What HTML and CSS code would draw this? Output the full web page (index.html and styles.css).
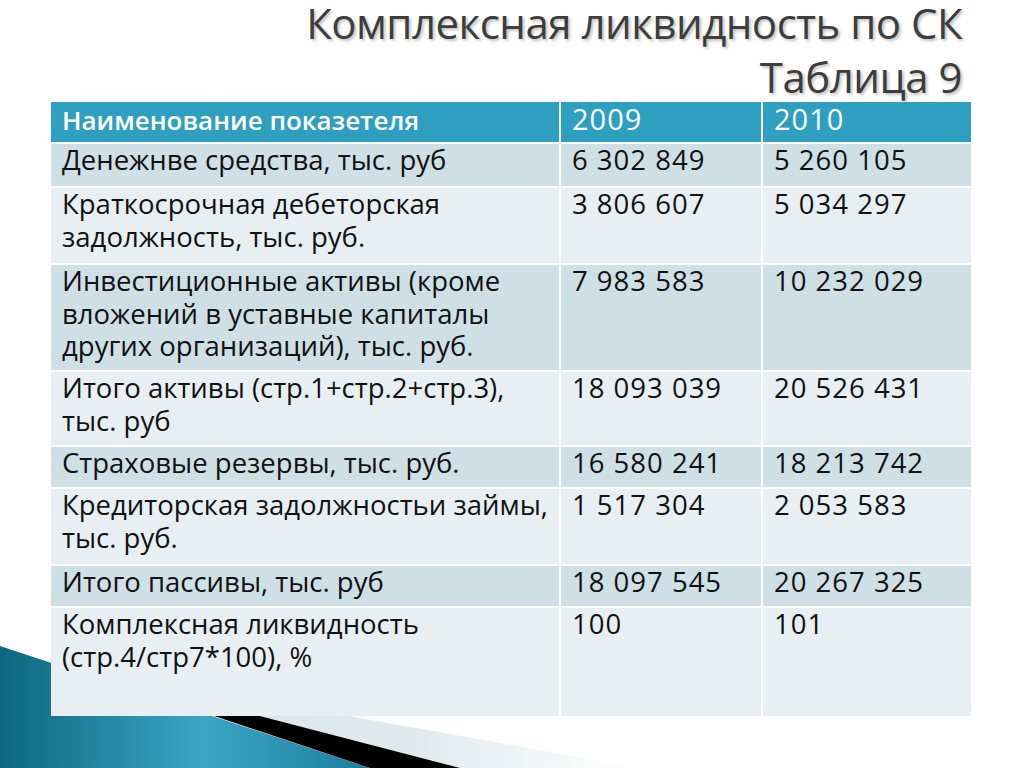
FILE: index.html
```html
<!DOCTYPE html>
<html lang="ru">
<head>
<meta charset="utf-8">
<title>Комплексная ликвидность по СК</title>
<link rel="stylesheet" href="styles.css">
</head>
<body>
<div class="slide">
  <svg class="deco" width="1024" height="168" viewBox="0 0 1024 168" xmlns="http://www.w3.org/2000/svg">
    <defs>
      <linearGradient id="teal" x1="0" y1="0" x2="1" y2="0">
        <stop offset="0" stop-color="#0e6781"/>
        <stop offset="0.55" stop-color="#3aa6c5"/>
        <stop offset="1" stop-color="#1b7f9b"/>
      </linearGradient>
      <linearGradient id="grey" x1="0" y1="0" x2="1" y2="0">
        <stop offset="0" stop-color="#d3e3ea"/>
        <stop offset="0.6" stop-color="#dfeaee"/>
        <stop offset="1" stop-color="#ffffff"/>
      </linearGradient>
    </defs>
    <polygon points="59,64 640,168 460,168" fill="url(#grey)"/>
    <polygon points="0,46 370,168 0,168" fill="url(#teal)"/>
    <polygon points="59,64 460,168 370,168" fill="#000"/>
  </svg>
  <header class="title">
    <div class="title-line first">Комплексная ликвидность по СК</div>
    <div class="title-line second">Таблица 9</div>
  </header>
  <div class="table">
    <div class="cell head">Наименование показетеля</div>
    <div class="cell head num">2009</div>
    <div class="cell head num">2010</div>

    <div class="cell dark">Денежнве средства, тыс. руб</div>
    <div class="cell dark num">6 302 849</div>
    <div class="cell dark num">5 260 105</div>

    <div class="cell light">Краткосрочная дебеторская задолжность, тыс. руб.</div>
    <div class="cell light num">3 806 607</div>
    <div class="cell light num">5 034 297</div>

    <div class="cell dark">Инвестиционные активы (кроме вложений в уставные капиталы других организаций), тыс. руб.</div>
    <div class="cell dark num">7 983 583</div>
    <div class="cell dark num">10 232 029</div>

    <div class="cell light">Итого активы (стр.1+стр.2+стр.3), тыс. руб</div>
    <div class="cell light num">18 093 039</div>
    <div class="cell light num">20 526 431</div>

    <div class="cell dark">Страховые резервы, тыс. руб.</div>
    <div class="cell dark num">16 580 241</div>
    <div class="cell dark num">18 213 742</div>

    <div class="cell light">Кредиторская задолжностьи займы, тыс. руб.</div>
    <div class="cell light num">1 517 304</div>
    <div class="cell light num">2 053 583</div>

    <div class="cell dark">Итого пассивы, тыс. руб</div>
    <div class="cell dark num">18 097 545</div>
    <div class="cell dark num">20 267 325</div>

    <div class="cell light">Комплексная ликвидность<br>(стр.4/стр7*100), %</div>
    <div class="cell light num">100</div>
    <div class="cell light num">101</div>
  </div>
</div>
</body>
</html>
```

FILE: styles.css
```css
html, body {
  margin: 0;
  padding: 0;
  background: #ffffff;
}

.slide {
  position: relative;
  width: 1024px;
  height: 768px;
  overflow: hidden;
  background: #ffffff;
  font-family: "Open Sans", "Noto Sans", sans-serif;
}

.deco {
  position: absolute;
  left: 0;
  top: 600px;
  z-index: 0;
}

.title {
  position: relative;
  z-index: 1;
  display: flow-root;
  box-sizing: border-box;
  height: 102px;
  padding: 0 62px 0 0;
  text-align: right;
  color: #3d3d3d;
  font-size: 42px;
  font-weight: 400;
  font-stretch: 90%;
  line-height: 48px;
  letter-spacing: -0.5px;
  text-shadow: 2px 2px 3px rgba(0, 0, 0, 0.25);
}

.title-line.first {
  margin-top: -1px;
}

.title-line.second {
  margin-top: 6px;
}

.table {
  position: relative;
  z-index: 1;
  margin-left: 51px;
  width: 920px;
  display: grid;
  grid-template-columns: 508px 200px 208px;
  grid-template-rows: 40px 42px 75px 105px 73px 40px 75px 40px 108px;
  gap: 2px;
}

.cell {
  box-sizing: border-box;
  padding: 0 2px 0 11px;
  font-size: 27.5px;
  line-height: 32.5px;
  color: #111111;
}

.cell.num {
  letter-spacing: 1px;
}

.cell.head {
  background: #2e9fbf;
  color: #ffffff;
  font-size: 26px;
  font-weight: 600;
  padding-top: 2px;
}

.cell.head.num {
  font-weight: 400;
  font-size: 29px;
  padding-top: 1px;
}

.cell.dark {
  background: #cfdfe6;
}

.cell.light {
  background: #e8eff2;
}
```
